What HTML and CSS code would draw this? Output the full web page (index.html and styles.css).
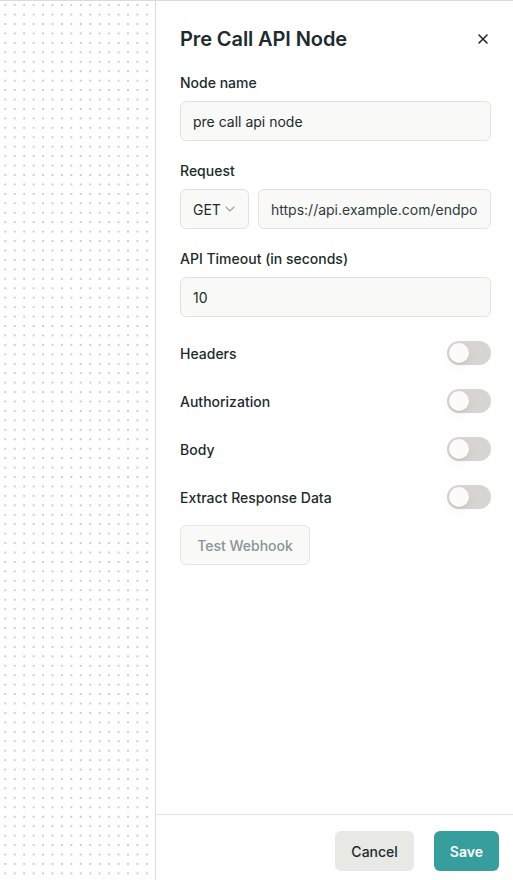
FILE: index.html
```html
<!DOCTYPE html>
<html lang="en">
<head>
    <meta charset="UTF-8">
    <meta name="viewport" content="width=device-width, initial-scale=1.0">
    <title>Pre Call API Node</title>
    <link rel="stylesheet" href="styles.css">
</head>
<body>
    <div class="canvas"></div>

    <aside class="panel">
        <div class="panel-body">
            <div class="panel-header">
                <h2>Pre Call API Node</h2>
                <button class="close-btn" aria-label="Close">
                    <svg width="12" height="12" viewBox="0 0 12 12" fill="none">
                        <path d="M2 2L10 10M10 2L2 10" stroke="#1c2b2b" stroke-width="1.6" stroke-linecap="round"/>
                    </svg>
                </button>
            </div>

            <div class="field">
                <label for="nodeName">Node name</label>
                <input class="input" id="nodeName" type="text" value="pre call api node">
            </div>

            <div class="field">
                <label for="url">Request</label>
                <div class="request-row">
                    <div class="input select">
                        GET
                        <svg width="10" height="6" viewBox="0 0 10 6" fill="none">
                            <path d="M1 1L5 5L9 1" stroke="#9aa3a3" stroke-width="1.1" stroke-linecap="round" stroke-linejoin="round"/>
                        </svg>
                    </div>
                    <input class="input url" id="url" type="text" value="https://api.example.com/endpoint">
                </div>
            </div>

            <div class="field">
                <label for="timeout">API Timeout (in seconds)</label>
                <input class="input" id="timeout" type="text" value="10">
            </div>

            <div class="toggles">
                <div class="toggle-row">
                    <span>Headers</span>
                    <div class="switch"><div class="knob"></div></div>
                </div>
                <div class="toggle-row">
                    <span>Authorization</span>
                    <div class="switch"><div class="knob"></div></div>
                </div>
                <div class="toggle-row">
                    <span>Body</span>
                    <div class="switch"><div class="knob"></div></div>
                </div>
                <div class="toggle-row">
                    <span>Extract Response Data</span>
                    <div class="switch"><div class="knob"></div></div>
                </div>
            </div>

            <button class="test-btn">Test Webhook</button>
        </div>

        <div class="panel-footer">
            <button class="btn btn-cancel">Cancel</button>
            <button class="btn btn-save">Save</button>
        </div>
    </aside>
</body>
</html>
```

FILE: styles.css
```css
* {
    margin: 0;
    padding: 0;
    box-sizing: border-box;
}

body {
    display: flex;
    height: 880px;
    overflow: hidden;
    font-family: 'Inter', 'Noto Sans', sans-serif;
    color: #1c2b2b;
    background: #fff;
    border-top: 1px solid #dddbd8;
}

.canvas {
    flex: 0 0 155px;
    background-color: #fff;
    background-image: radial-gradient(circle, #bdbdbd 0.6px, transparent 0.9px);
    background-size: 9.45px 9.45px;
    background-position: 0.6px -0.6px;
}

.panel {
    flex: 1;
    min-width: 0;
    display: flex;
    flex-direction: column;
    border-left: 1px solid #dcdad7;
    background: #fff;
}

.panel-body {
    flex: 1;
    padding: 24px 22px 0 24px;
}

.panel-header {
    display: flex;
    justify-content: space-between;
    align-items: center;
    margin-bottom: 20px;
}

.panel-header h2 {
    font-size: 20px;
    font-weight: 600;
    line-height: 28px;
    letter-spacing: -0.1px;
}

.close-btn {
    background: none;
    border: none;
    width: 20px;
    height: 20px;
    display: flex;
    align-items: center;
    justify-content: center;
    margin-right: -2px;
    cursor: pointer;
}

.field {
    margin-bottom: 20px;
}

.field label {
    display: block;
    font-size: 14px;
    font-weight: 500;
    line-height: 20px;
    margin-bottom: 8px;
}

.input {
    width: 100%;
    height: 40px;
    display: flex;
    align-items: center;
    padding: 0 12px;
    background: #f9f9f7;
    border: 1px solid #e3e2df;
    border-radius: 6px;
    font-family: inherit;
    font-size: 14px;
    color: #1c2b2b;
    white-space: nowrap;
    outline: none;
}

.request-row {
    display: flex;
    gap: 9px;
}

.select {
    flex: 0 0 69px;
    gap: 4px;
}

.url {
    flex: 1;
    min-width: 0;
    color: #2f3b3b;
}

.toggles {
    display: flex;
    flex-direction: column;
    gap: 24px;
    margin-top: 24px;
}

.toggle-row {
    display: flex;
    justify-content: space-between;
    align-items: center;
    height: 24px;
    font-size: 14px;
    font-weight: 500;
}

.switch {
    width: 44px;
    height: 24px;
    border-radius: 12px;
    background: #d7d4d1;
    padding: 2px;
}

.knob {
    width: 20px;
    height: 20px;
    border-radius: 50%;
    background: #fbfbfa;
    box-shadow: 0 4px 8px rgba(0, 0, 0, 0.06), 0 1px 2px rgba(0, 0, 0, 0.05);
}

.test-btn {
    margin-top: 16px;
    width: 130px;
    height: 40px;
    background: #f9f9f8;
    border: 1px solid #e6e5e2;
    border-radius: 6px;
    font-family: inherit;
    font-size: 14px;
    font-weight: 500;
    color: #8a9595;
}

.panel-footer {
    display: flex;
    justify-content: flex-end;
    gap: 20px;
    border-top: 1px solid #e5e4e1;
    padding: 16px 14px 9px;
}

.btn {
    height: 40px;
    border: none;
    border-radius: 6px;
    font-family: inherit;
    font-size: 14px;
    font-weight: 500;
    padding: 0 16px;
    cursor: pointer;
}

.btn-cancel {
    background: #e8e8e4;
    color: #1c2b2b;
}

.btn-save {
    background: #369e9c;
    color: #fff;
    font-weight: 600;
}
```
